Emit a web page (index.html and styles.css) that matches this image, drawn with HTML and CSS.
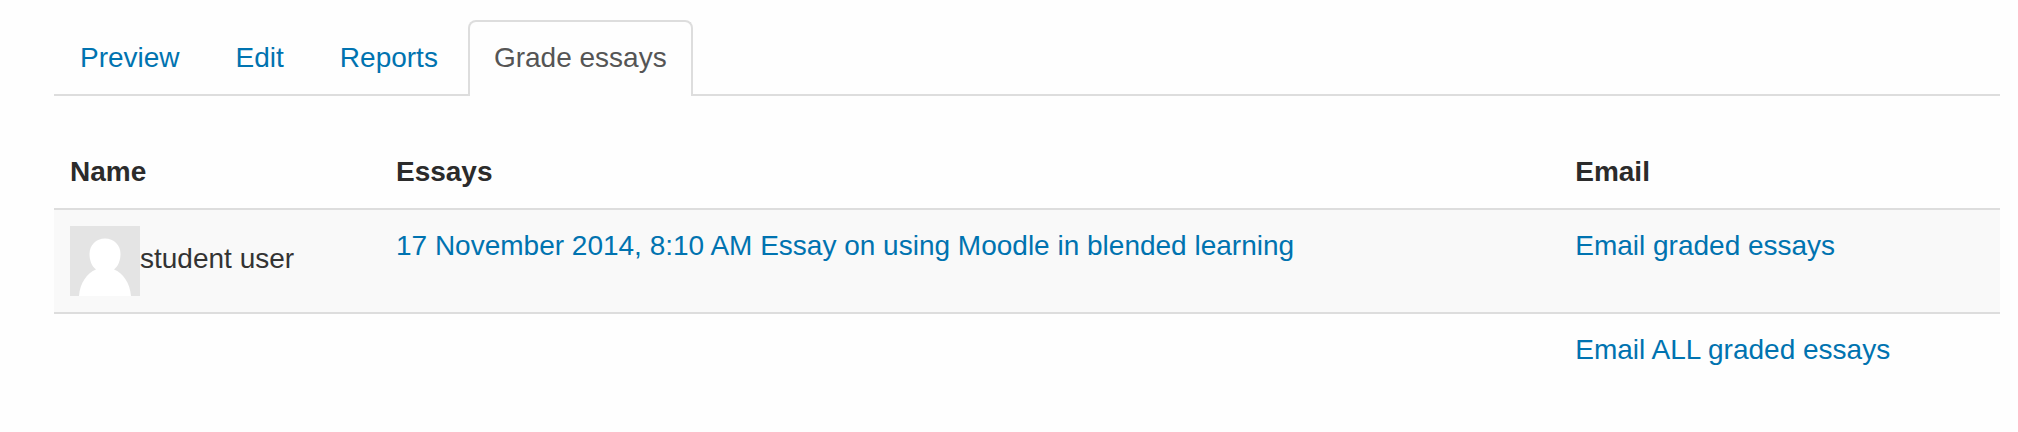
FILE: index.html
```html
<!DOCTYPE html>
<html lang="en">
<head>
  <meta charset="utf-8">
  <title>Grade essays</title>
  <link rel="stylesheet" href="styles.css">
</head>
<body>
  <main class="page">
    <nav class="tabs" aria-label="Lesson">
      <a class="tab" href="#preview">Preview</a>
      <a class="tab" href="#edit">Edit</a>
      <a class="tab" href="#reports">Reports</a>
      <a class="tab tab-active" href="#grade" aria-current="page">Grade essays</a>
    </nav>
    <table class="essays">
      <colgroup>
        <col class="col-name">
        <col class="col-essays">
        <col class="col-email">
      </colgroup>
      <thead>
        <tr>
          <th scope="col">Name</th>
          <th scope="col">Essays</th>
          <th scope="col">Email</th>
        </tr>
      </thead>
      <tbody>
        <tr class="row-shaded">
          <td class="user"><svg class="avatar" viewBox="0 0 70 70" aria-hidden="true"><rect width="70" height="70" fill="#e4e4e4"/><path fill="#fff" d="M9 70C10 57 17 47 26 43.500C21.500 40 19.500 34 19.500 28C19.500 19 26 12.500 35 12.500S50.500 19 50.500 28C50.500 34 48.500 40 44 43.500C53 47 60 57 61 70Z"/></svg>student user</td>
          <td><a href="#essay">17 November 2014, 8:10 AM Essay on using Moodle in blended learning</a></td>
          <td><a href="#email">Email graded essays</a></td>
        </tr>
        <tr>
          <td></td>
          <td></td>
          <td><a href="#email-all">Email ALL graded essays</a></td>
        </tr>
      </tbody>
    </table>
  </main>
</body>
</html>
```
FILE: styles.css
```css
body {
  margin: 0;
  background: #fefefe;
  color: #333;
  font: 28px/40px "Liberation Sans", Arial, sans-serif;
}

a {
  color: #0073b0;
  text-decoration: none;
}

.page {
  padding: 20px 18px 0 54px;
}

.tabs {
  display: flex;
  gap: 4px;
  margin-bottom: 40px;
  border-bottom: 2px solid #ddd;
}

.tab {
  margin-bottom: -2px;
  padding: 16px 24px 18px;
  border: 2px solid transparent;
  border-bottom: 0;
  border-radius: 8px 8px 0 0;
}

.tab-active {
  border-color: #ddd;
  background: #fefefe;
  color: #555;
}

.essays {
  width: 100%;
  table-layout: fixed;
  border-spacing: 0;
}

.essays th {
  color: #2b2b2b;
}

.col-name {
  width: 16.75%;
}

.col-essays {
  width: 60.6%;
}

.essays th,
.essays td {
  padding: 16px;
  text-align: left;
  vertical-align: top;
}

.essays td {
  border-top: 2px solid #ddd;
}

.row-shaded td {
  background: #f9f9f9;
}

.avatar {
  width: 70px;
  height: 70px;
  vertical-align: middle;
}
```
